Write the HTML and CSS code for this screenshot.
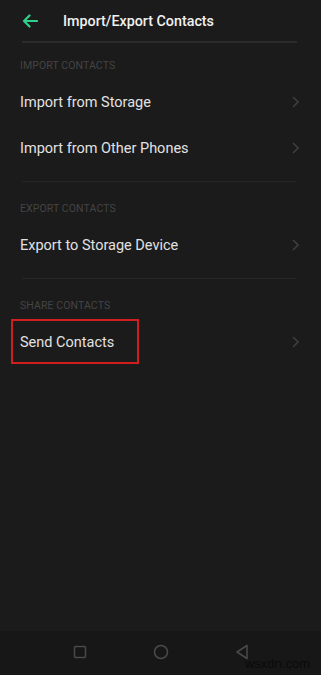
FILE: index.html
```html
<!DOCTYPE html>
<html lang="en">

<head>
    <meta charset="UTF-8">
    <meta name="viewport" content="width=device-width, initial-scale=1.0">
    <title>Import/Export Contacts</title>
    <link rel="stylesheet" href="styles.css">
</head>

<body>
    <div class="screen">
        <div class="header">
            <svg class="back" width="16" height="14" viewBox="0 0 16 14">
                <path d="M15 7H2M7.5 1.5L2 7l5.5 5.5" fill="none" stroke="#2fd08a" stroke-width="2.2" stroke-linecap="round" stroke-linejoin="round" />
            </svg>
            <span class="title">Import/Export Contacts</span>
        </div>

        <div class="group">
            <div class="label">IMPORT CONTACTS</div>
            <div class="item">
                <span>Import from Storage</span>
                <svg class="chev" width="7" height="12" viewBox="0 0 7 12"><path d="M1 1l5 5-5 5" /></svg>
            </div>
            <div class="item">
                <span>Import from Other Phones</span>
                <svg class="chev" width="7" height="12" viewBox="0 0 7 12"><path d="M1 1l5 5-5 5" /></svg>
            </div>
        </div>

        <div class="group">
            <div class="label">EXPORT CONTACTS</div>
            <div class="item">
                <span>Export to Storage Device</span>
                <svg class="chev" width="7" height="12" viewBox="0 0 7 12"><path d="M1 1l5 5-5 5" /></svg>
            </div>
        </div>

        <div class="group last">
            <div class="label">SHARE CONTACTS</div>
            <div class="item marked">
                <span>Send Contacts</span>
                <svg class="chev" width="7" height="12" viewBox="0 0 7 12"><path d="M1 1l5 5-5 5" /></svg>
                <div class="highlight"></div>
            </div>
        </div>

        <div class="spacer"></div>

        <div class="navbar">
            <svg width="14" height="14" viewBox="0 0 14 14"><rect x="1.5" y="1.5" width="11" height="11" rx="1" /></svg>
            <svg width="16" height="16" viewBox="0 0 16 16"><circle cx="8" cy="8" r="6.5" /></svg>
            <svg width="14" height="16" viewBox="0 0 14 16"><path d="M12 1.5L2 8l10 6.5z" stroke-linejoin="round" /></svg>
            <span class="mark">wsxdn.com</span>
        </div>
    </div>
</body>

</html>
```

FILE: styles.css
```css
* {
    box-sizing: border-box;
}

body {
    margin: 0;
    background-color: #1b1b1b;
    font-family: Roboto, "Noto Sans", sans-serif;
    color: #e2e2e2;
}

.screen {
    width: 321px;
    height: 675px;
    display: flex;
    flex-direction: column;
    overflow: hidden;
}

.header {
    height: 41px;
    display: flex;
    align-items: center;
    padding-left: 22px;
    margin: 0 18px 0 0;
}

.header .back {
    margin-right: 25px;
}

.title {
    font-size: 14.3px;
    font-weight: 500;
    color: #f0f0f0;
}

.header + .group {
    border-top: 2px solid #2b2b2b;
    margin-top: 0;
}

.group {
    padding-bottom: 10px;
    margin: 0 24px 0 22px;
    border-bottom: 1px solid #262626;
}

.group.last {
    border-bottom: none;
}

.label {
    font-size: 10.5px;
    line-height: 20px;
    padding-top: 17px;
    padding-bottom: 3px;
    color: #444;
    letter-spacing: 0.1px;
    margin-left: -2px;
}

.header + .group .label {
    padding-top: 13px;
}

.item {
    position: relative;
    height: 46px;
    display: flex;
    align-items: center;
    justify-content: space-between;
    font-size: 14.5px;
    margin-left: -2px;
    margin-right: -2px;
}

.chev path {
    fill: none;
    stroke: #3d3d3d;
    stroke-width: 1.6;
}

.highlight {
    position: absolute;
    left: -9px;
    top: 0;
    width: 128px;
    height: 45px;
    border: 2px solid #d11d1d;
}

.spacer {
    flex: 1;
}

.navbar {
    position: relative;
    height: 44px;
    background-color: #171717;
    display: flex;
    align-items: center;
    justify-content: center;
    gap: 66px;
    padding-bottom: 2px;
}

.navbar svg {
    fill: none;
    stroke: #4a4a4a;
    stroke-width: 1.5;
}

.mark {
    position: absolute;
    right: 11px;
    bottom: 4px;
    font-family: "Liberation Sans", Arial, sans-serif;
    font-size: 13px;
    color: #0a0a0a;
}
```
